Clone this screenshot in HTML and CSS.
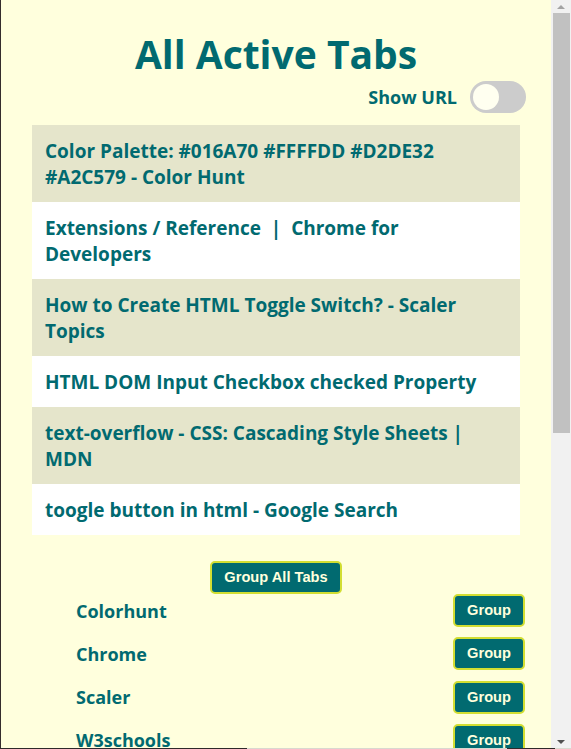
FILE: index.html
```html
<!DOCTYPE html>
<html lang="en">
<head>
<meta charset="utf-8">
<title>All Active Tabs</title>
<link rel="stylesheet" href="styles.css">
</head>
<body>
<div class="window">
  <div class="frame">
    <main class="popup">
      <h1 class="title">All Active Tabs</h1>
      <div class="url-row">
        <span class="url-label">Show URL</span>
        <label class="switch">
          <input type="checkbox" class="switch-input">
          <span class="switch-knob"></span>
        </label>
      </div>
      <ul class="tabs">
        <li class="tab">Color Palette: #016A70 #FFFFDD #D2DE32 #A2C579 - Color Hunt</li>
        <li class="tab">Extensions / Reference &nbsp;|&nbsp; Chrome for Developers</li>
        <li class="tab">How to Create HTML Toggle Switch? - Scaler Topics</li>
        <li class="tab">HTML DOM Input Checkbox checked Property</li>
        <li class="tab">text-overflow - CSS: Cascading Style Sheets | MDN</li>
        <li class="tab">toogle button in html - Google Search</li>
      </ul>
      <div class="group-all">
        <button class="btn">Group All Tabs</button>
      </div>
      <ul class="groups">
        <li class="group-row"><span class="group-name">Colorhunt</span><button class="btn">Group</button></li>
        <li class="group-row"><span class="group-name">Chrome</span><button class="btn">Group</button></li>
        <li class="group-row"><span class="group-name">Scaler</span><button class="btn">Group</button></li>
        <li class="group-row"><span class="group-name">W3schools</span><button class="btn">Group</button></li>
      </ul>
    </main>
    <div class="scrollbar">
      <div class="sb-arrow"><span class="tri-up"></span></div>
      <div class="sb-thumb"></div>
      <div class="sb-space"></div>
      <div class="sb-arrow"><span class="tri-down"></span></div>
    </div>
  </div>
  <div class="edge">
    <span class="edge-dark e1"></span>
    <span class="edge-light e2"></span>
    <span class="edge-dark e3"></span>
    <span class="edge-light e4"></span>
  </div>
</div>
</body>
</html>
```

FILE: styles.css
```css
* { box-sizing: border-box; }

html, body {
  margin: 0;
  padding: 0;
  height: 749px;
  overflow: hidden;
  background: #ffffdd;
}

.window {
  display: flex;
  flex-direction: column;
  width: 571px;
  height: 749px;
}

.frame {
  display: flex;
  height: 748px;
}

.popup {
  flex: 1;
  min-width: 0;
  border-left: 1px solid #352d2d;
  background: #ffffdd;
  overflow: hidden;
  padding-top: 30px;
  font-family: "Open Sans", "DejaVu Sans", sans-serif;
  font-weight: 700;
  color: #016a70;
}

.title {
  margin: 0;
  font-size: 39px;
  line-height: 48px;
  font-weight: 700;
  text-align: center;
}

.url-row {
  display: flex;
  justify-content: flex-end;
  align-items: center;
  gap: 13px;
  margin: 3px 25px 0 0;
  height: 32px;
}

.url-label {
  font-size: 18px;
  line-height: 24px;
}

.switch {
  display: flex;
  align-items: center;
  width: 56px;
  height: 32px;
  padding: 3px;
  border-radius: 16px;
  background: #cccccc;
}

.switch-input {
  display: none;
}

.switch-knob {
  width: 26px;
  height: 26px;
  border-radius: 50%;
  background: #fffff0;
}

.tabs {
  list-style: none;
  margin: 12px 31px 0 31px;
  padding: 0;
}

.tab {
  padding: 12.5px 25px 12.5px 13px;
  font-size: 19px;
  line-height: 26px;
  background: #ffffff;
}

.tab:nth-child(odd) {
  background: #e5e5cb;
}

.group-all {
  display: flex;
  justify-content: center;
  margin-top: 26px;
}

.btn {
  font-family: "Liberation Sans", Arial, sans-serif;
  font-weight: 700;
  font-size: 14.67px;
  line-height: 17px;
  padding: 6px 12px;
  color: #ffffdd;
  background: #016a70;
  border: 2px solid #d2de32;
  border-radius: 5px;
}

.groups {
  list-style: none;
  margin: 0 26px 0 75px;
  padding: 0;
  display: flex;
  flex-direction: column;
  gap: 10.33px;
}

.group-row {
  display: flex;
  justify-content: space-between;
  align-items: center;
  height: 33px;
}

.group-name {
  font-size: 18px;
  line-height: 24px;
}

.scrollbar {
  width: 20px;
  display: flex;
  flex-direction: column;
  background: #f1f1f1;
}

.sb-arrow {
  height: 13px;
  display: flex;
  align-items: center;
  justify-content: center;
}

.tri-up {
  width: 0;
  height: 0;
  border-left: 4.5px solid transparent;
  border-right: 4.5px solid transparent;
  border-bottom: 4px solid #a3a3a3;
}

.tri-down {
  width: 0;
  height: 0;
  border-left: 4.5px solid transparent;
  border-right: 4.5px solid transparent;
  border-top: 4px solid #505050;
}

.sb-thumb {
  height: 420px;
  margin: 0 1px 0 2px;
  background: #c1c1c1;
}

.sb-space {
  flex: 1;
}

.edge {
  display: flex;
  height: 1px;
}

.edge-dark { background: #2e2a2a; }
.edge-light { background: #d9d9cf; }
.e1 { width: 247px; }
.e2 { width: 260px; }
.e3 { width: 48px; }
.e4 { flex: 1; }
```
